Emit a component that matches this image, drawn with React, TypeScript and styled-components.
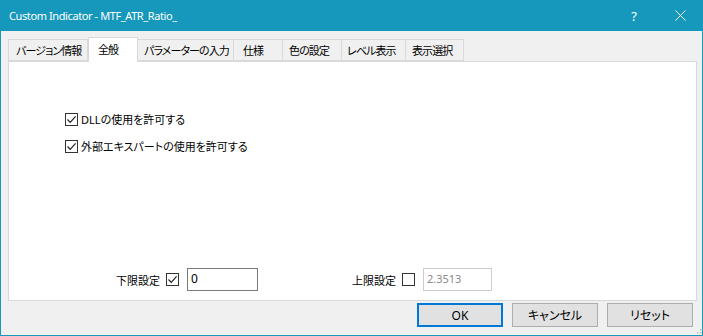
import styled, { createGlobalStyle } from "styled-components";

const GlobalStyle = createGlobalStyle`
  html, body {
    margin: 0;
    padding: 0;
    background: #f0f0f0;
  }
`;

const tabs = [
  { label: "バージョン情報", width: 80, pad: 7 },
  { label: "全般", width: 50, pad: 9, active: true },
  { label: "パラメーターの入力", width: 96, pad: 6 },
  { label: "仕様", width: 49, pad: 9 },
  { label: "色の設定", width: 59, pad: 6 },
  { label: "レベル表示", width: 64, pad: 5 },
  { label: "表示選択", width: 58, pad: 6 },
];

function CheckMark({ checked }: { checked: boolean }) {
  return (
    <CheckBox>
      {checked && (
        <svg width="11" height="11" viewBox="0 0 11 11">
          <path d="M1.5 5.5 L4.2 8.3 L9.6 2.3" fill="none" stroke="#222" strokeWidth="1.2" />
        </svg>
      )}
    </CheckBox>
  );
}

function App() {
  return (
    <Window>
      <GlobalStyle />
      <TitleBar>
        <Title>Custom Indicator - MTF_ATR_Ratio_</Title>
        <TitleButton>?</TitleButton>
        <TitleButton>
          <svg width="11" height="11" viewBox="0 0 11 11">
            <path d="M0.5 0.5 L10.5 10.5 M10.5 0.5 L0.5 10.5" stroke="#fff" strokeWidth="1" />
          </svg>
        </TitleButton>
      </TitleBar>
      <Body>
        <TabStrip>
          {tabs.map((t) => (
            <Tab key={t.label} active={!!t.active} pad={t.pad} style={{ width: t.width }}>
              {t.label}
            </Tab>
          ))}
        </TabStrip>
        <Panel>
          <Options>
            <OptionRow>
              <CheckMark checked />
              <span>DLLの使用を許可する</span>
            </OptionRow>
            <OptionRow>
              <CheckMark checked />
              <span>外部エキスパートの使用を許可する</span>
            </OptionRow>
          </Options>
          <LimitRow>
            <LimitGroup>
              <LimitLabel>下限設定</LimitLabel>
              <CheckMark checked />
              <Field>0</Field>
            </LimitGroup>
            <LimitGroup>
              <LimitLabel>上限設定</LimitLabel>
              <CheckMark checked={false} />
              <Field disabled>2.3513</Field>
            </LimitGroup>
          </LimitRow>
        </Panel>
        <ButtonRow>
          <Button primary>OK</Button>
          <Button>キャンセル</Button>
          <Button>リセット</Button>
        </ButtonRow>
        <Grip>
          <svg width="10" height="10" viewBox="0 0 10 10">
            {[
              [8, 2], [8, 5], [8, 8], [5, 5], [5, 8], [2, 8],
            ].map(([x, y]) => (
              <rect key={`${x}-${y}`} x={x} y={y} width="1.5" height="1.5" fill="#bcbcbc" />
            ))}
          </svg>
        </Grip>
      </Body>
    </Window>
  );
}

const Window = styled.div`
  width: 703px;
  height: 336px;
  box-sizing: border-box;
  border: 1px solid #1598bb;
  border-top: none;
  display: flex;
  flex-direction: column;
  background: #f0f0f0;
  font-family: "Noto Sans", "Noto Sans CJK JP", sans-serif;
  font-size: 11px;
  font-feature-settings: "palt" 1;
  color: #000;
  overflow: hidden;
`;

const TitleBar = styled.div`
  height: 31px;
  flex: none;
  background: #1598bb;
  display: flex;
  align-items: center;
  color: #fff;
  margin: 0 -1px;
  padding-left: 9px;
`;

const Title = styled.div`
  flex: 1;
  font-size: 11px;
  letter-spacing: -0.4px;
  font-family: "Noto Sans", sans-serif;
  margin-top: -1px;
`;

const TitleButton = styled.div`
  width: 46px;
  height: 31px;
  display: flex;
  align-items: center;
  justify-content: center;
  font-size: 13px;
`;

const Body = styled.div`
  flex: 1;
  position: relative;
  padding: 6px 5px 0 7px;
  display: flex;
  flex-direction: column;
`;

const TabStrip = styled.div`
  display: flex;
  align-items: flex-end;
  height: 24px;
  position: relative;
  z-index: 1;
`;

const Tab = styled.div<{ active: boolean; pad: number }>`
  box-sizing: border-box;
  height: ${(p) => (p.active ? "25px" : "22px")};
  margin-bottom: ${(p) => (p.active ? "-1px" : "0")};
  border: 1px solid #d9d9d9;
  border-bottom: ${(p) => (p.active ? "none" : "1px solid #d9d9d9")};
  border-left: ${(p) => (p.active ? "1px solid #d9d9d9" : "none")};
  background: ${(p) => (p.active ? "#fff" : "#f0f0f0")};
  display: flex;
  align-items: center;
  padding-left: ${(p) => p.pad}px;
  letter-spacing: -0.9px;
  white-space: nowrap;
  overflow: hidden;
  padding-bottom: ${(p) => (p.active ? "3px" : "0")};
  &:first-child {
    border-left: 1px solid #d9d9d9;
  }
`;

const Panel = styled.div`
  box-sizing: border-box;
  height: 240px;
  background: #fff;
  border: 1px solid #d9d9d9;
  display: flex;
  flex-direction: column;
  padding: 49px 0 9px 56px;
`;

const Options = styled.div`
  display: flex;
  flex-direction: column;
  gap: 11px;
`;

const OptionRow = styled.div`
  display: flex;
  align-items: center;
  gap: 3px;
  height: 16px;
`;

const CheckBox = styled.span`
  box-sizing: border-box;
  width: 13px;
  height: 13px;
  border: 1px solid #333;
  background: #fff;
  display: inline-flex;
  align-items: center;
  justify-content: center;
  flex: none;
`;

const LimitRow = styled.div`
  margin-top: auto;
  display: flex;
  padding-left: 51px;
  gap: 94px;
`;

const LimitGroup = styled.div`
  display: flex;
  align-items: center;
  gap: 6px;
`;

const LimitLabel = styled.span`
  margin-right: 0;
`;

const Field = styled.div<{ disabled?: boolean }>`
  box-sizing: border-box;
  width: ${(p) => (p.disabled ? "69px" : "71px")};
  height: 23px;
  margin-left: 2px;
  border: 1px solid ${(p) => (p.disabled ? "#cccccc" : "#7a7a7a")};
  color: ${(p) => (p.disabled ? "#8a8a8a" : "#000")};
  padding: 2px 3px;
  font-family: "Noto Sans", sans-serif;
  font-size: ${(p) => (p.disabled ? "11px" : "12px")};
  line-height: 16px;
`;

const ButtonRow = styled.div`
  display: flex;
  justify-content: flex-end;
  gap: 9px;
  margin-top: 2px;
  padding-right: 4px;
`;

const Button = styled.div<{ primary?: boolean }>`
  box-sizing: border-box;
  width: 86px;
  height: 24px;
  background: #e1e1e1;
  border: ${(p) => (p.primary ? "2px solid #0078d7" : "1px solid #adadad")};
  display: flex;
  align-items: center;
  justify-content: center;
  font-size: 12px;
`;

const Grip = styled.div`
  position: absolute;
  right: 0;
  bottom: 0;
  width: 10px;
  height: 10px;
`;

export default App;
